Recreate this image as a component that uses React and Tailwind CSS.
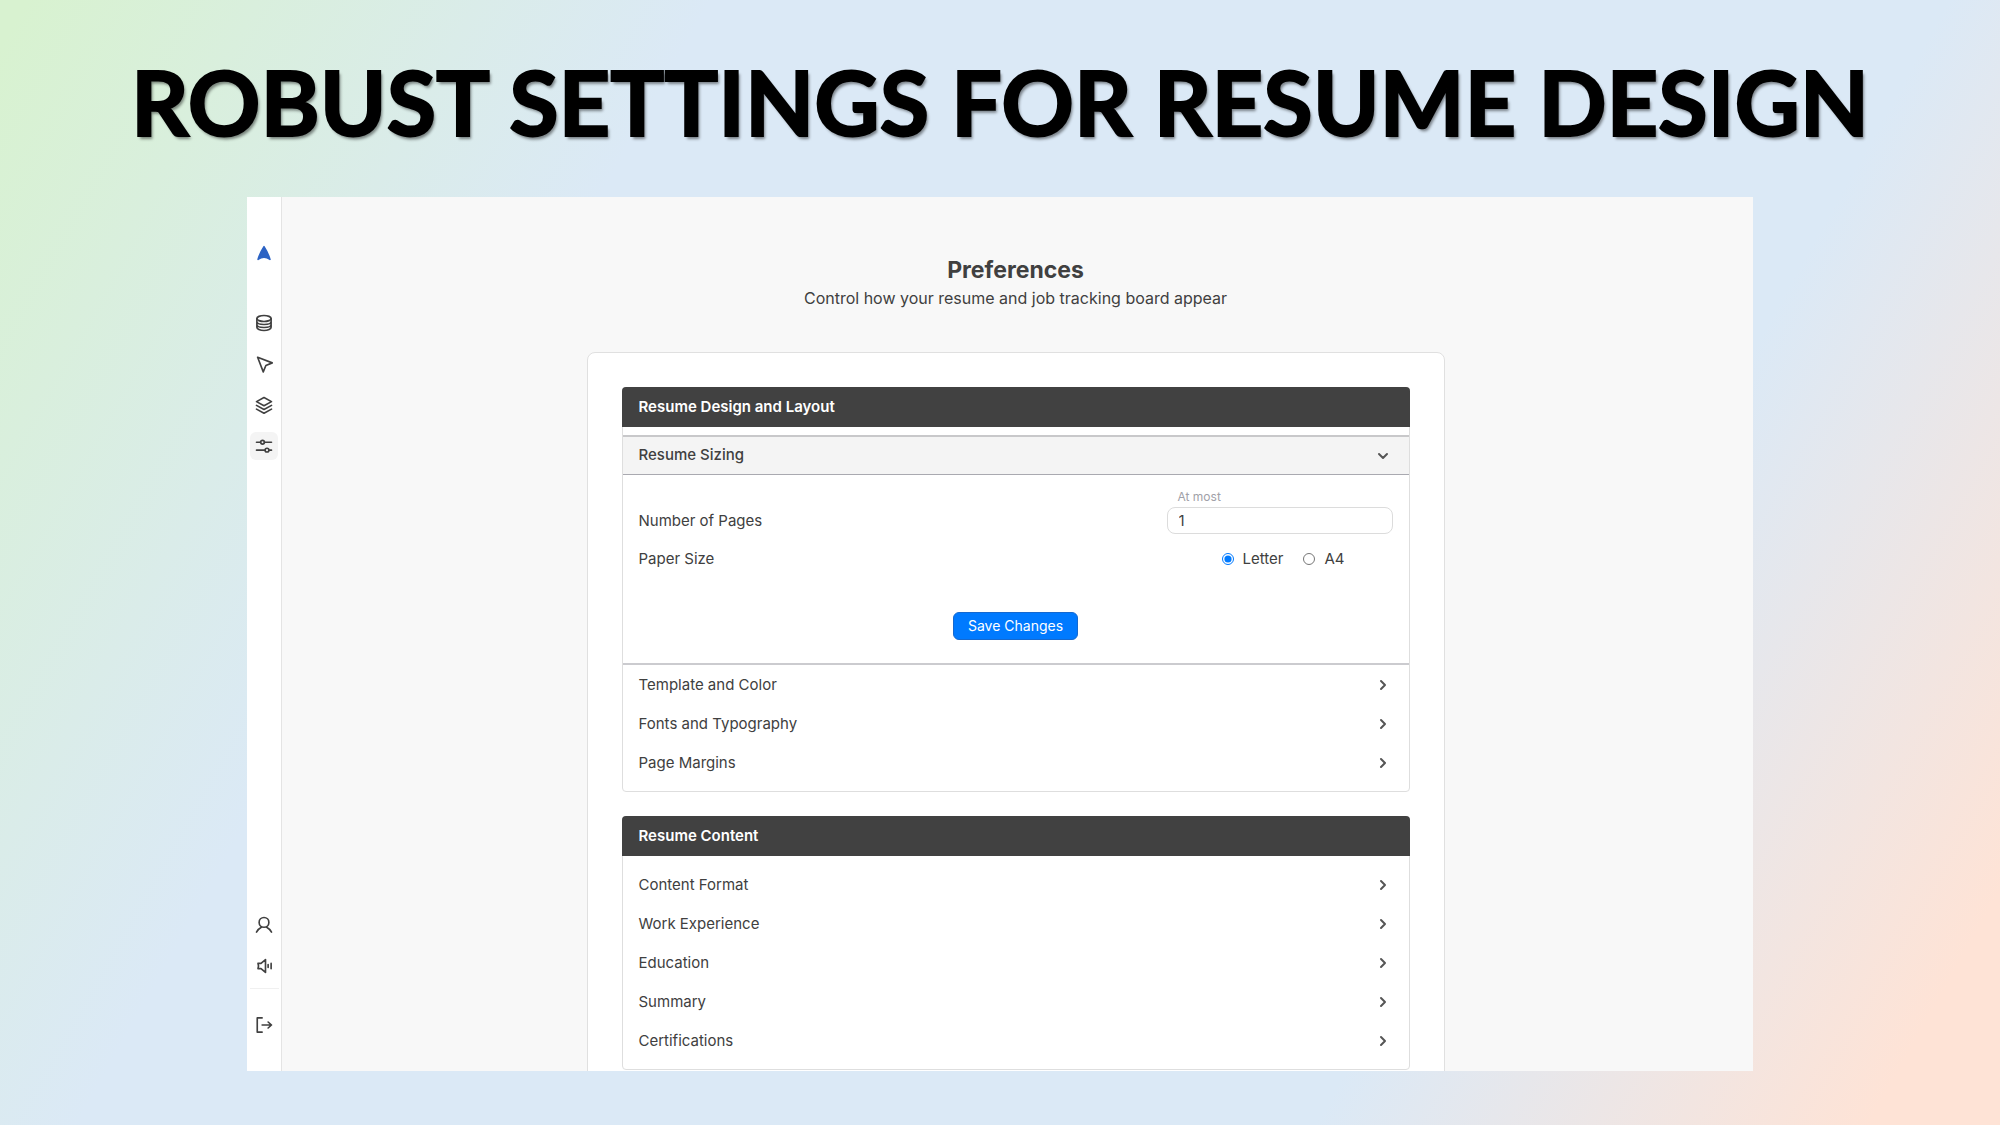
import { useState } from "react";
import { ChevronDown, ChevronRight } from "lucide-react";

const stroke = {
  fill: "none",
  stroke: "currentColor",
  strokeWidth: 2.2,
  strokeLinecap: "round",
  strokeLinejoin: "round",
};

function Icon({ label, active, children, className = "" }) {
  return (
    <button
      type="button"
      aria-label={label}
      className={`flex size-7 items-center justify-center rounded-md ${active ? "bg-[#f4f4f4]" : ""} ${className}`}
    >
      <svg viewBox="0 0 24 24" className="size-[18px]" {...stroke}>
        {children}
      </svg>
    </button>
  );
}

function Sidebar() {
  return (
    <nav
      aria-label="Main"
      className="flex w-[35px] shrink-0 flex-col items-center border-r border-[#e4e4e4] bg-white pt-[42px] pb-8 text-[#404040]"
    >
      <Icon label="Home" className="text-[#2b62c4]">
        <path
          fill="currentColor"
          strokeWidth="2"
          d="M12 3.500 C15 8 18 14 20 20.500 Q16 17.500 12 17.500 Q8 17.500 4 20.500 C6 14 9 8 12 3.500 Z"
        />
      </Icon>
      <div className="mt-[42px] flex flex-col gap-[13px]">
        <Icon label="Data">
          <ellipse cx="12" cy="6" rx="9.500" ry="4" />
          <path d="M2.500 6v11.500c0 2.200 4 4.500 9.500 4.500s9.500-2.300 9.500-4.500V6M2.500 10c0 2.200 4 4 9.500 4s9.500-1.800 9.500-4M2.500 14c0 2.200 4 4 9.500 4s9.500-1.800 9.500-4" />
        </Icon>
        <Icon label="Apply">
          <path d="M3.500 3 L23 10.500 L14.500 14 L11 22.500 Z" />
        </Icon>
        <Icon label="Layers">
          <path d="M12 2 L22 7.500 L12 13 L2 7.500 Z" />
          <path d="M2 12.500 L12 18 L22 12.500 M2 17.500 L12 23 L22 17.500" />
        </Icon>
        <Icon label="Preferences" active>
          <path d="M2 7h5.500M12.500 7H22M2 17.500h11.500M18.500 17.500H22" />
          <circle cx="10" cy="7" r="2.500" />
          <circle cx="16" cy="17.500" r="2.500" />
        </Icon>
      </div>
      <div className="mt-auto flex flex-col gap-[13px]">
        <Icon label="Account">
          <circle cx="12" cy="8.500" r="6.500" />
          <path d="M2 21.500c1.500-3 3.500-5 6.500-6.500M22 21.500c-1.500-3-3.500-5-6.500-6.500" />
        </Icon>
        <Icon label="Announcements">
          <path d="M4 8.500h4l6-5v17l-6-5H4c1-2.500 1-4.500 0-7zM17.500 10v4M21.500 8.500v7" />
        </Icon>
      </div>
      <div className="mt-2 mb-[22px] h-px w-[29px] bg-[#f0f0f0]" />
      <Icon label="Log out">
        <path d="M9.500 2.500H3v19h6.500M9.500 12H22M17.500 8l4.500 4-4.500 4" />
      </Icon>
    </nav>
  );
}

function Row({ children }) {
  return (
    <button type="button" className="flex h-[39px] w-full items-center justify-between px-4 text-left">
      {children}
      <ChevronRight className="mr-[2px] mb-0.5 size-4 text-[#555555]" strokeWidth={3} />
    </button>
  );
}

function Section({ title, children, className = "" }) {
  return (
    <section className={`rounded border border-[#dedede] ${className}`}>
      <h2 className="-mx-px -mt-px flex h-10 items-center rounded-t bg-[#414141] px-[17px] font-semibold text-white">
        {title}
      </h2>
      {children}
    </section>
  );
}

function ResumeSizing() {
  const [pages, setPages] = useState("1");
  const [paper, setPaper] = useState("Letter");
  return (
    <div className="mt-2 border-b-2 border-[#cbcbcf]">
      <button
        type="button"
        aria-expanded="true"
        className="flex h-10 w-full items-center justify-between border-t-2 border-b border-t-[#c8c8ca] border-b-[#a9a9b0] bg-[#f4f4f4] px-4 text-left font-medium"
      >
        Resume Sizing
        <ChevronDown className="mr-[2px] size-4 text-[#555555]" strokeWidth={3} />
      </button>
      <div className="px-4 pt-3 pb-[23px]">
        <div className="flex items-end justify-between">
          <label htmlFor="pages" className="leading-[27px]">
            Number of Pages
          </label>
          <div className="flex w-[226px] flex-col">
            <span className="px-[11px] pb-px text-[12px] leading-[19px] text-[#a1a1a8]">At most</span>
            <input
              id="pages"
              value={pages}
              onChange={(e) => setPages(e.target.value)}
              className="h-[27px] rounded-lg border border-[#dcdcdc] bg-white px-[11px] outline-none"
            />
          </div>
        </div>
        <fieldset className="mt-[13px] flex items-center justify-between">
          <legend className="float-left leading-6">Paper Size</legend>
          <div className="mr-12 flex gap-5">
            {["Letter", "A4"].map((size) => (
              <label key={size} className="flex items-center gap-[9px] leading-6">
                <input
                  type="radio"
                  name="paper"
                  checked={paper === size}
                  onChange={() => setPaper(size)}
                  className="size-3 accent-[#007aff]"
                />
                {size}
              </label>
            ))}
          </div>
        </fieldset>
        <div className="mt-[41px] flex justify-center">
          <button
            type="button"
            className="h-7 rounded-md border border-[#1569d0] bg-[#007aff] px-[14px] text-[14px] leading-none text-white"
          >
            Save Changes
          </button>
        </div>
      </div>
    </div>
  );
}

export default function App() {
  return (
    <div className="flex h-screen flex-col overflow-hidden bg-[linear-gradient(119.4deg,#d8f2d0_1%,#dbe9f6_27%,#dbe9f6_74%,#fee3d6_95%)]">
      <h1 className="pt-[43px] text-center font-['Lato',sans-serif] text-[90px] leading-[116px] font-bold whitespace-nowrap text-black [-webkit-text-stroke:2px_black] [text-shadow:2px_3px_3px_rgba(0,0,0,0.45)]">
        ROBUST SETTINGS FOR RESUME DESIGN
      </h1>
      <div className="mx-auto mt-[38px] mb-[54px] flex min-h-0 w-[75.3%] flex-1 bg-[#f8f8f8] font-['Inter',sans-serif] text-[15px] text-[#404040]">
        <Sidebar />
        <main className="min-w-0 flex-1 overflow-hidden pr-1">
          <header className="pt-[57px] text-center">
            <h2 className="text-[23px] leading-8 font-bold">Preferences</h2>
            <p className="text-base leading-6">Control how your resume and job tracking board appear</p>
          </header>
          <div className="mx-auto mt-[42px] w-full max-w-[858px] rounded-lg border border-[#e0e0e0] bg-white px-[34px] pt-[34px] pb-10">
            <Section title="Resume Design and Layout">
              <ResumeSizing />
              <div className="pt-px pb-2">
                <Row>Template and Color</Row>
                <Row>Fonts and Typography</Row>
                <Row>Page Margins</Row>
              </div>
            </Section>
            <Section title="Resume Content" className="mt-6">
              <div className="pt-[10px] pb-2">
                <Row>Content Format</Row>
                <Row>Work Experience</Row>
                <Row>Education</Row>
                <Row>Summary</Row>
                <Row>Certifications</Row>
              </div>
            </Section>
          </div>
        </main>
      </div>
    </div>
  );
}
